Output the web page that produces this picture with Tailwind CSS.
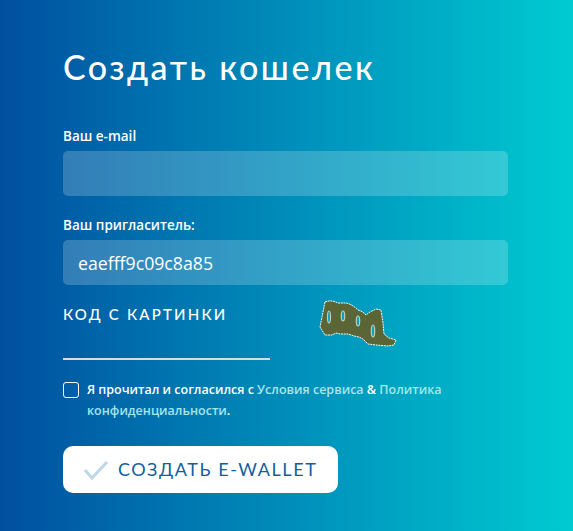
<!DOCTYPE html>
<html lang="ru">
	<head>
		<meta charset="UTF-8" />
		<script src="https://cdn.jsdelivr.net/npm/@tailwindcss/browser@4"></script>
		<title>Создать кошелек</title>
	</head>

	<body class="overflow-hidden">
		<div class="h-[531px] w-[573px] bg-linear-to-r from-[#004f9f] to-[#00cbd1] pl-[63px] pr-[65px] pt-[46px] font-['Open_Sans',sans-serif] text-white">
			<h1 class="font-['Lato',sans-serif] text-[34px] font-medium leading-[42px] tracking-[2.5px]">Создать кошелек</h1>

			<label class="mt-[38px] block text-[13.5px] font-semibold leading-[20px]">Ваш e-mail</label>
			<input type="text" class="mt-[5px] block h-[45px] w-full rounded-[5px] bg-white/20 px-[15px] text-[17.7px]" />

			<label class="mt-[19px] block text-[13.5px] font-semibold leading-[20px]">Ваш пригласитель:</label>
			<input type="text" value="eaefff9c09c8a85" class="mt-[5px] block h-[45px] w-full rounded-[5px] bg-white/20 px-[15px] text-[17.7px]" />

			<div class="relative mt-[19px] h-[56px] w-[207px] border-b-2 border-[#d6dde2]">
				<span class="block font-['Lato',sans-serif] text-[15px] font-medium leading-[20px] tracking-[2.2px]">КОД С КАРТИНКИ</span>
				<svg class="absolute left-[247px] top-[-11px]" width="100" height="60" viewBox="0 0 100 60">
					<path d="M15 9 C20 7 24 8 28 10 L36 10 C41 11 45 14 48 17 C52 18 54 20 56 22 L60 19 L66 16 L71 17 L73 30 L74 41 L79 45 L86 47 L84 52 L78 53 L66 52 L58 51 L53 46 L49 44 L44 43 L38 41 L30 41 L26 40 L22 42 L15 42 L10 34 L12 24 Z" fill="#5b6637" stroke="#f4f6ee" stroke-width="1" stroke-dasharray="2 0.7" stroke-linejoin="round" />
					<ellipse cx="19" cy="24" rx="1.5" ry="6" fill="#009cbe" stroke="#c6ccb4" stroke-width="1.2" />
					<ellipse cx="33" cy="23" rx="1.7" ry="5" fill="#009ebf" stroke="#c6ccb4" stroke-width="1.2" />
					<ellipse cx="48" cy="28" rx="1.7" ry="5" fill="#00a2c1" stroke="#c6ccb4" stroke-width="1.2" />
					<ellipse cx="63" cy="38" rx="1.7" ry="6" fill="#00a6c3" stroke="#c6ccb4" stroke-width="1.2" />
				</svg>
			</div>

			<div class="mt-[19px] flex gap-2 text-[12.5px] font-semibold leading-[21px]">
				<span class="mt-[3px] h-4 w-4 shrink-0 rounded-[3px] border border-white"></span>
				<p>Я прочитал и согласился с <a href="#" class="text-[#a5e6ea]">Условия сервиса</a> &amp; <a href="#" class="text-[#a5e6ea]">Политика конфиденциальности</a>.</p>
			</div>

			<button class="mt-[25px] flex h-[47px] w-[275px] items-center gap-[9px] rounded-[10px] bg-white pl-5 font-['Lato',sans-serif] text-[18px] tracking-[1.6px] text-[#0f5fa3]">
				<svg width="26" height="20" viewBox="0 0 26 20" fill="none"><path d="M2 10 L9 18 L24 2" stroke="#bfd6e6" stroke-width="3" /></svg>
				СОЗДАТЬ E-WALLET
			</button>
		</div>
	</body>
</html>
